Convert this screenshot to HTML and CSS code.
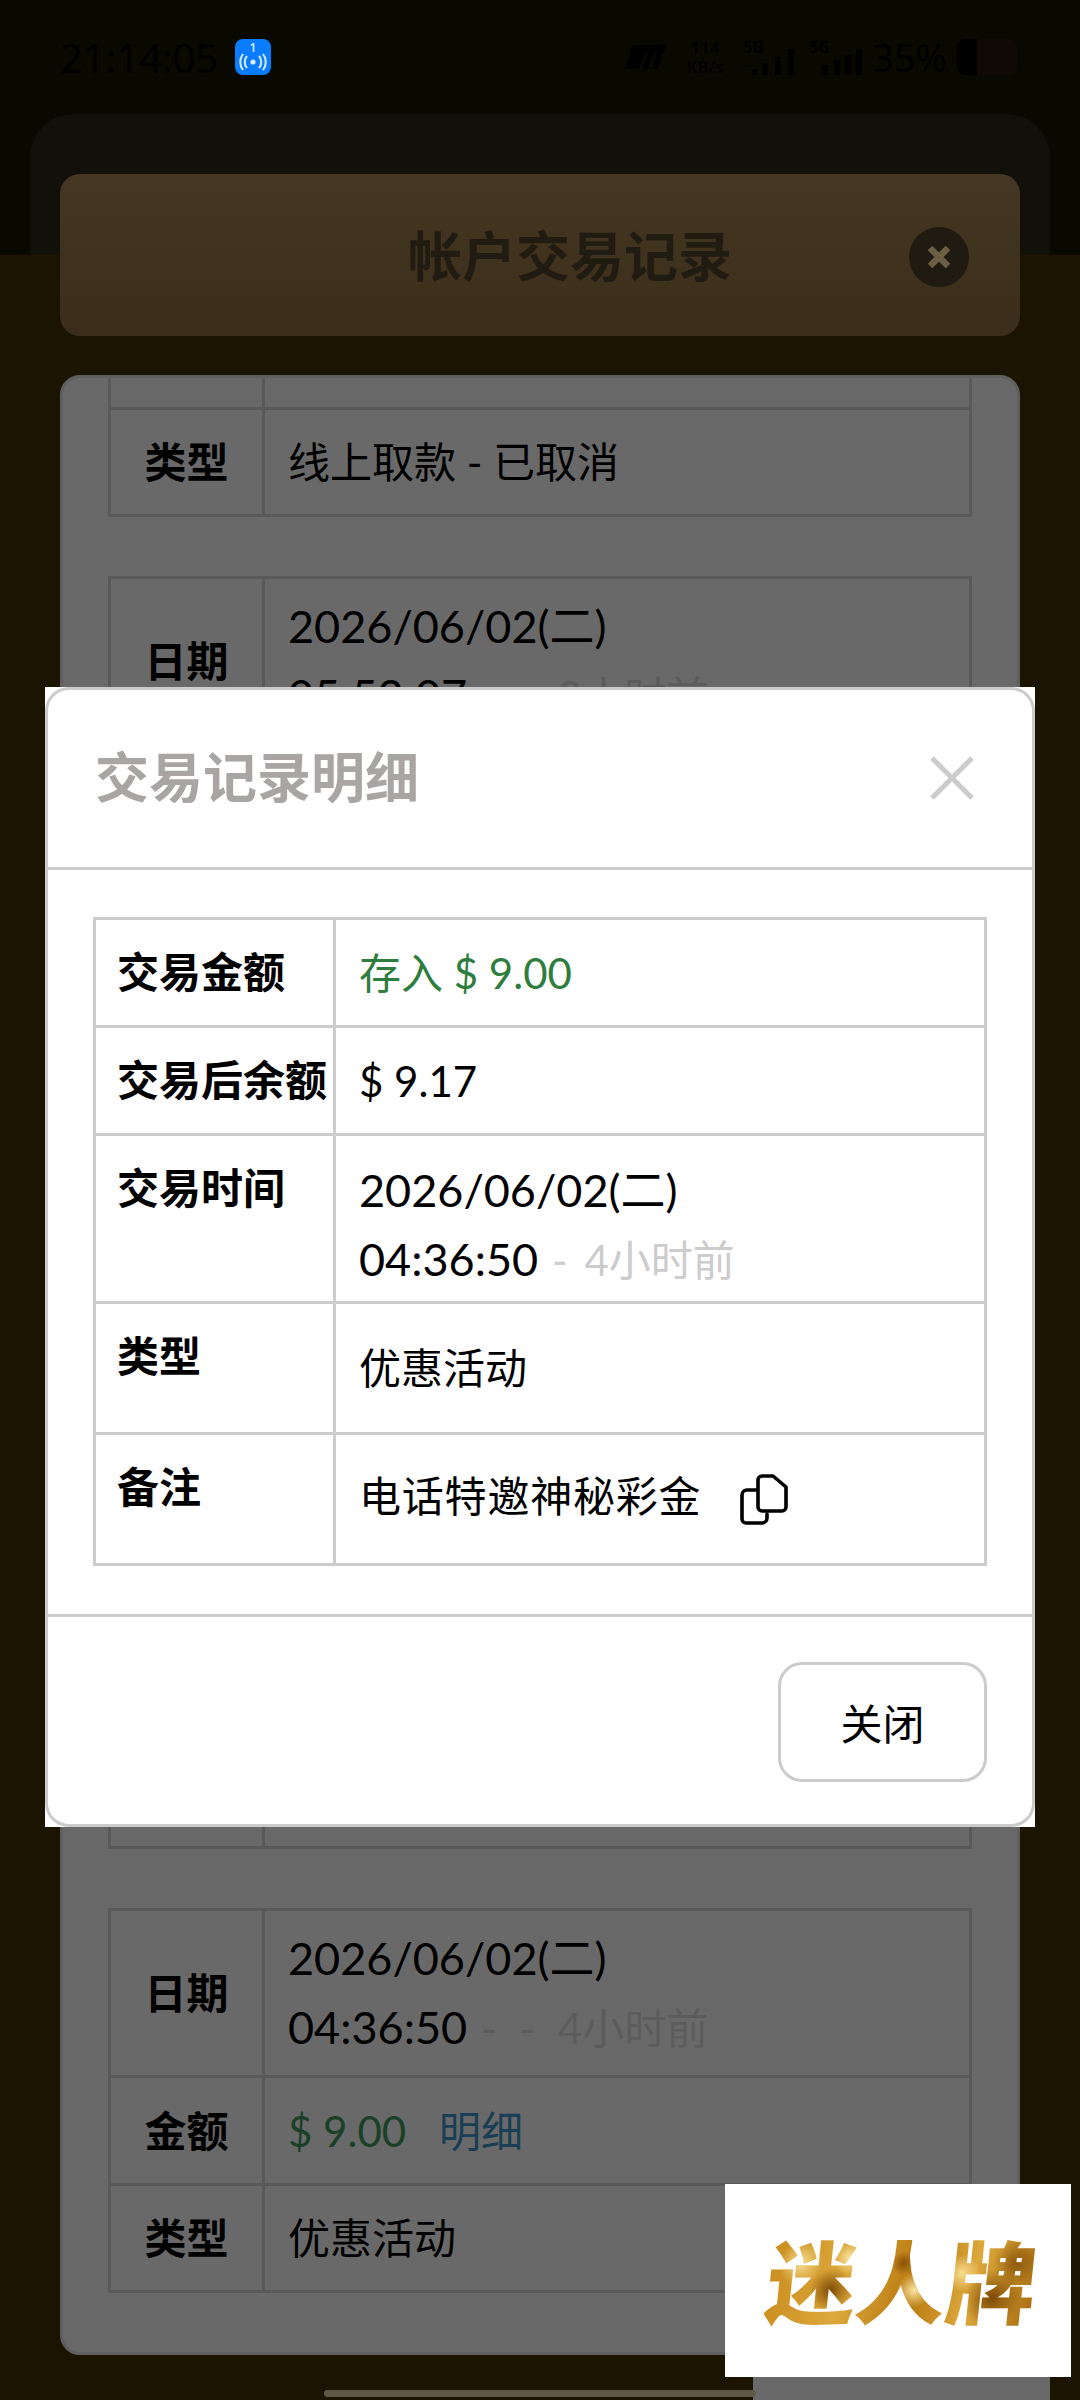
FILE: index.html
```html
<!DOCTYPE html>
<html>
<head>
    <meta charset="UTF-8">
    <title>帐户交易记录</title>
    <link rel="stylesheet" href="styles.css">
</head>
<body>
<div class="page">

    <div class="status">
        <span class="time">21:14:05</span>
        <svg class="hotspot" width="36" height="36" viewBox="0 0 36 36">
            <rect width="36" height="36" rx="8" fill="#0a7cff"/>
            <text x="18" y="13" text-anchor="middle" class="hotspot-num">1</text>
            <circle cx="18" cy="23" r="2.6" fill="#d8ecff"/>
            <path d="M12 17a9 9 0 0 0 0 12M24 17a9 9 0 0 1 0 12M8 15a13 13 0 0 0 0 16M28 15a13 13 0 0 1 0 16" fill="none" stroke="#d8ecff" stroke-width="2"/>
        </svg>
        <div class="status-right">
            <svg class="carrier" width="42" height="24" viewBox="0 0 42 24"><path d="M9 0h33l-8 24h-6l5-17h-3l-6 17h-6l6-17h-3l-6 17H0z" fill="#000"/></svg>
            <div class="speed"><span>114</span><span>KB/s</span></div>
            <div class="sim sim-first">
                <span class="sim-tag">5G</span>
                <svg width="54" height="26" viewBox="0 0 54 26"><path d="M0 18l3-3 3 3zM9 20h5v6H9zM19 14h6v12h-6zM32 8h6v18h-6zM45 0h6v26h-6z" fill="#000"/></svg>
            </div>
            <div class="sim">
                <span class="sim-tag">5G</span>
                <svg width="40" height="26" viewBox="0 0 40 26"><path d="M0 16h6v10H0zM12 11h6v15h-6zM23 6h6v20h-6zM34 0h6v26h-6z" fill="#000"/></svg>
            </div>
            <span class="battery-text">35%</span>
            <div class="battery"><div class="battery-fill"></div></div>
        </div>
    </div>

    <div class="sheet">
        <div class="sheet-head">
            <span class="sheet-title">帐户交易记录</span>
            <div class="sheet-close">
                <svg width="26" height="24" viewBox="0 0 26 24"><path d="M4 3l18 18M22 3L4 21" stroke="#6b5e42" stroke-width="6.5"/></svg>
            </div>
        </div>

        <div class="panel">
            <table class="tx cut">
                <tr class="row-cut"><th></th><td></td></tr>
                <tr class="row-type"><th>类型</th><td>线上取款 - 已取消</td></tr>
            </table>

            <table class="tx">
                <tr class="row-date"><th>日期</th><td><span class="stamp">2026/06/02(二)<br>05:52:07</span><span class="ago">- - 3小时前</span></td></tr>
                <tr class="row-money"><th></th><td></td></tr>
                <tr class="row-type"><th></th><td></td></tr>
            </table>

            <table class="tx">
                <tr class="row-date"><th></th><td></td></tr>
                <tr class="row-money"><th></th><td></td></tr>
                <tr class="row-type"><th></th><td></td></tr>
            </table>

            <table class="tx">
                <tr class="row-date"><th></th><td></td></tr>
                <tr class="row-money"><th></th><td></td></tr>
                <tr class="row-type"><th></th><td></td></tr>
            </table>

            <table class="tx">
                <tr class="row-date"><th>日期</th><td><span class="stamp">2026/06/02(二)<br>04:36:50</span><span class="ago">- - 4小时前</span></td></tr>
                <tr class="row-money"><th>金额</th><td><span class="money">$ 9.00</span> <span class="link">明细</span></td></tr>
                <tr class="row-type"><th>类型</th><td>优惠活动</td></tr>
            </table>
        </div>
    </div>

    <div class="modal">
        <div class="modal-box">
            <div class="modal-head">
                <span class="modal-title">交易记录明细</span>
                <svg class="modal-x" width="44" height="44" viewBox="0 0 44 44"><path d="M2 2l40 40M42 2L2 42" stroke="#cccccc" stroke-width="5"/></svg>
            </div>
            <div class="modal-body">
                <table class="detail">
                    <tr class="d-short"><th class="mid">交易金额</th><td class="green">存入 $ 9.00</td></tr>
                    <tr class="d-short"><th class="mid">交易后余额</th><td>$ 9.17</td></tr>
                    <tr class="d-time"><th>交易时间</th><td><span class="stamp">2026/06/02(二)<br>04:36:50</span><span class="ago-light">- 4小时前</span></td></tr>
                    <tr class="d-tall"><th>类型</th><td>优惠活动</td></tr>
                    <tr class="d-tall">
                        <th>备注</th>
                        <td>
                            <div class="note">
                                <span class="note-text">电话特邀神秘彩金</span>
                                <svg class="copy" width="50" height="52" viewBox="0 0 50 52" fill="none" stroke="#000" stroke-width="3.6" stroke-linecap="round" stroke-linejoin="round">
                                    <path d="M23 3h11l13 11v20a4 4 0 0 1-4 4H23a4 4 0 0 1-4-4V7a4 4 0 0 1 4-4z"/>
                                    <path d="M17 17H8a5 5 0 0 0-5 5v24a4 4 0 0 0 4 4h16a5 5 0 0 0 5-5v-4"/>
                                </svg>
                            </div>
                        </td>
                    </tr>
                </table>
            </div>
            <div class="modal-foot">
                <div class="btn">关闭</div>
            </div>
        </div>
    </div>

    <div class="float-tab"></div>
    <div class="logo"><span class="logo-text">迷人牌</span></div>
    <div class="home-bar"></div>
</div>
</body>
</html>
```

FILE: styles.css
```css
* {
    box-sizing: border-box;
}

body {
    margin: 0;
    font-family: Lato, "Noto Sans CJK SC", sans-serif;
    color: black;
}

.page {
    position: relative;
    width: 1080px;
    height: 2400px;
    overflow: hidden;
    background: linear-gradient(#0a0900 0, #0a0900 255px, #1a1400 255px);
}

/* status bar, almost black because of the dim layer */
.status {
    display: flex;
    align-items: center;
    height: 114px;
    padding: 0 63px 0 60px;
    color: #000;
}

.time {
    font-family: "Open Sans", sans-serif;
    font-size: 40px;
    width: 175px;
}

.hotspot-num {
    font-family: "Open Sans", sans-serif;
    font-size: 12px;
    font-weight: 600;
    fill: #d8ecff;
}

.status-right {
    display: flex;
    align-items: center;
    margin-left: auto;
}

.speed {
    display: flex;
    flex-direction: column;
    align-items: center;
    width: 42px;
    margin-left: 18px;
    font-family: "Open Sans", sans-serif;
    font-size: 17px;
    font-weight: 600;
    line-height: 19px;
    white-space: nowrap;
}

.sim {
    position: relative;
    display: flex;
    justify-content: flex-end;
    align-items: flex-end;
    width: 53px;
    height: 36px;
    margin-left: 12px;
}

.sim-first {
    width: 54px;
    margin-left: 17px;
}

.sim-tag {
    position: absolute;
    left: 0;
    top: -3px;
    font-family: "Open Sans", sans-serif;
    font-size: 16px;
    font-weight: 700;
}

.battery-text {
    font-family: "Open Sans", sans-serif;
    font-size: 38px;
    margin-left: 10px;
}

.battery {
    width: 60px;
    height: 36px;
    margin-left: 10px;
    border-radius: 8px;
    background: #0f0a03;
    overflow: hidden;
}

.battery-fill {
    width: 20px;
    height: 36px;
    background: #000;
}

/* main sheet */
.sheet {
    margin: 0 30px;
    height: 2286px;
    padding: 60px 30px 0;
    border-radius: 44px 44px 0 0;
    background: linear-gradient(#11110a 0, #11110a 141px, transparent 141px);
}

.sheet-head {
    display: flex;
    align-items: center;
    justify-content: center;
    position: relative;
    height: 162px;
    padding-left: 60px;
    border-radius: 20px;
    background: linear-gradient(#453722, #3a2e1a);
}

.sheet-title {
    margin-bottom: 4px;
    font-size: 54px;
    font-weight: 700;
    color: #211c11;
}

.sheet-close {
    position: absolute;
    right: 51px;
    top: 53px;
    width: 60px;
    height: 60px;
    border-radius: 50%;
    background: #201b10;
    display: flex;
    align-items: center;
    justify-content: center;
}

.panel {
    margin-top: 39px;
    height: 1980px;
    padding: 0 45px;
    border: 3px solid #5f5f5f;
    border-radius: 20px;
    background: #696969;
    overflow: hidden;
}

.tx {
    width: 864px;
    margin-bottom: 59px;
    border-collapse: collapse;
    table-layout: fixed;
    font-size: 42px;
}

.tx.cut {
    margin-top: -6px;
}

.tx th,
.tx td {
    border: 3.5px solid #595959;
    padding: 0;
    line-height: 68px;
    font-weight: 400;
}

.tx th {
    width: 154px;
    text-align: center;
    font-weight: 700;
}

.tx td {
    padding-left: 23px;
}

.row-cut {
    height: 35px;
}

.row-date {
    height: 167px;
}

.row-money {
    height: 108px;
}

.row-type {
    height: 107px;
}

/* the date stamps are a little larger than the chinese text around them */
.stamp {
    font-size: 45px;
}

.ago {
    color: #5c5c5c;
    margin-left: 14px;
    word-spacing: 12px;
}

.money {
    color: #1a4026;
}

.link {
    color: #193f55;
    margin-left: 22px;
}

/* detail dialog */
.modal {
    position: absolute;
    left: 45px;
    top: 687px;
    width: 990px;
    height: 1140px;
    background: #fff;
}

.modal-box {
    height: 1140px;
    border: 3px solid #cccccc;
    border-radius: 24px;
    display: flex;
    flex-direction: column;
}

.modal-head {
    display: flex;
    align-items: center;
    justify-content: space-between;
    height: 180px;
    padding: 0 58px 0 47px;
    border-bottom: 3px solid #cccccc;
}

.modal-title {
    margin-bottom: 9px;
    font-size: 54px;
    font-weight: 700;
    color: #aaa5a5;
}

.modal-x {
    margin-bottom: 2px;
}

.modal-body {
    padding: 47px 45px 0;
    height: 747px;
    border-bottom: 3px solid #cccccc;
}

.detail {
    width: 894px;
    border-collapse: collapse;
    table-layout: fixed;
    font-size: 42px;
}

.detail th,
.detail td {
    border: 3.5px solid #cccccc;
    line-height: 68px;
}

.detail th {
    width: 240px;
    padding: 18px 0 0 21px;
    text-align: left;
    vertical-align: top;
    white-space: nowrap;
    font-weight: 700;
}

.detail th.mid {
    padding-top: 0;
    padding-bottom: 2px;
    vertical-align: middle;
}

.detail td {
    padding: 0 0 0 23px;
    font-weight: 400;
}

.d-short {
    height: 108px;
}

.d-time {
    height: 168px;
}

.d-time td {
    padding-top: 12px;
}

.d-tall {
    height: 131px;
}

.green {
    color: #2e7d3e;
}

.ago-light {
    color: #cccccc;
    margin-left: 14px;
    word-spacing: 6px;
}

.note {
    display: flex;
    align-items: center;
    gap: 38px;
}

.note-text {
    margin-bottom: 6px;
    letter-spacing: 0.8px;
}

.modal-foot {
    flex: 1;
    display: flex;
    justify-content: flex-end;
    align-items: center;
    padding: 2px 45px 0 0;
}

.btn {
    width: 209px;
    height: 120px;
    border: 3px solid #cccccc;
    border-radius: 24px;
    font-size: 42px;
    display: flex;
    align-items: center;
    justify-content: center;
}

/* floating logo, bottom right */
.float-tab {
    position: absolute;
    left: 753px;
    top: 2377px;
    width: 297px;
    height: 23px;
    background: #696969;
}

.logo {
    position: absolute;
    left: 725px;
    top: 2184px;
    width: 346px;
    height: 193px;
    padding: 0 0 6px 8px;
    background: #fff;
    display: flex;
    align-items: center;
    justify-content: center;
}

.logo-text {
    font-family: "Noto Sans CJK SC", sans-serif;
    font-size: 90px;
    font-weight: 900;
    line-height: 100px;
    transform: skewX(-6deg);
    background:
        radial-gradient(circle at 12% 35%, #f7dc8e 0, transparent 9%),
        radial-gradient(circle at 24% 62%, #7c4a06 0, transparent 10%),
        radial-gradient(circle at 30% 30%, #fbe6a4 0, transparent 8%),
        radial-gradient(circle at 50% 35%, #8a5208 0, transparent 8%),
        radial-gradient(circle at 55% 62%, #fbe6a4 0, transparent 11%),
        radial-gradient(circle at 72% 45%, #f7dc8e 0, transparent 9%),
        radial-gradient(circle at 84% 70%, #7c4a06 0, transparent 12%),
        radial-gradient(circle at 92% 35%, #8d5a0e 0, transparent 9%),
        linear-gradient(100deg, #c98a1c, #dca83c 30%, #b8790f 55%, #dca83c 75%, #a96c10);
    -webkit-background-clip: text;
    background-clip: text;
    color: transparent;
}

.home-bar {
    position: absolute;
    left: 324px;
    top: 2390px;
    width: 432px;
    height: 7px;
    border-radius: 4px;
    background: #5f5843;
}
```
